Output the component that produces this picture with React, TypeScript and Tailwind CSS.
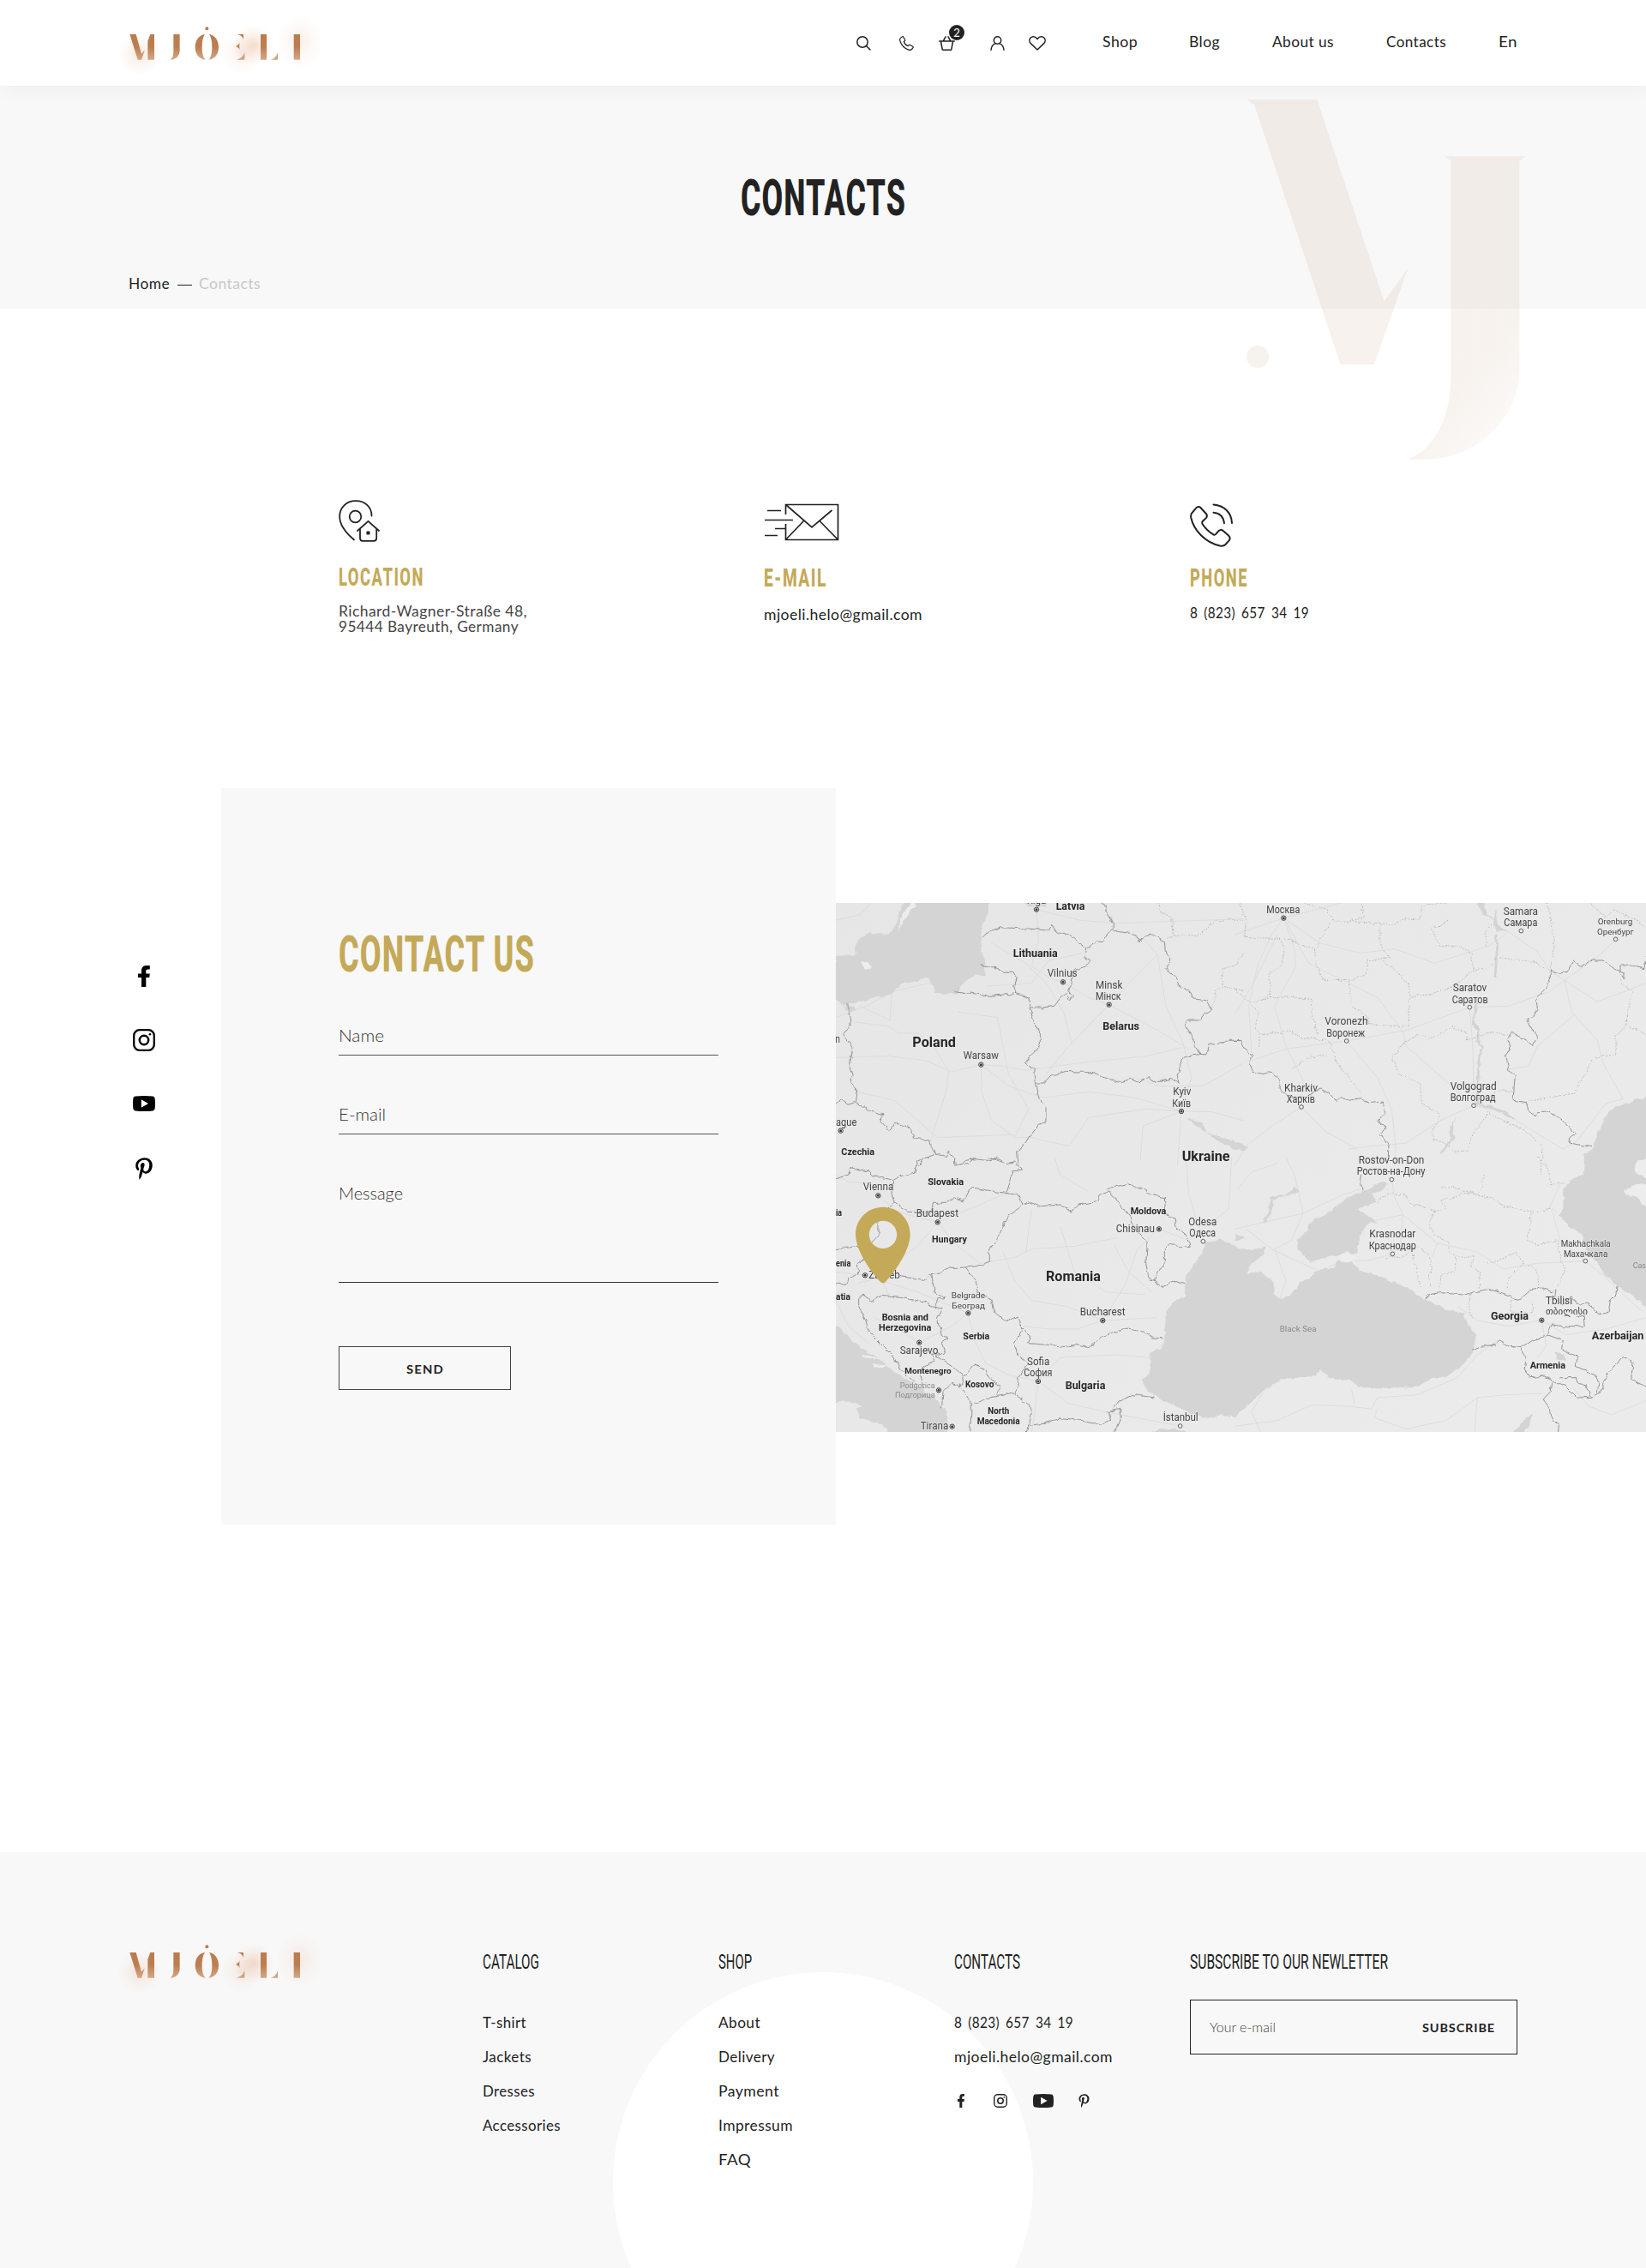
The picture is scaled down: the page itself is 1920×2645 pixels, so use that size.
import { useLayoutEffect, useRef, type ReactNode } from "react";
import { FaPinterestP } from "react-icons/fa";

/* Text stretched horizontally to fill the width given by its class. */
function Fit({ className = "", children }: { className?: string; children: ReactNode }) {
  const box = useRef<HTMLSpanElement>(null);
  const ink = useRef<HTMLSpanElement>(null);
  useLayoutEffect(() => {
    const measure = () => {
      if (!box.current || !ink.current) return;
      ink.current.style.transform = "none";
      const natural = ink.current.getBoundingClientRect().width;
      const k = box.current.getBoundingClientRect().width / natural;
      ink.current.style.transform = `scaleX(${k})`;
    };
    measure();
    document.fonts.ready.then(measure);
  }, []);
  return (
    <span ref={box} className={`block shrink-0 whitespace-nowrap text-left ${className}`}>
      <span ref={ink} className="inline-block origin-left">
        {children}
      </span>
    </span>
  );
}

function Logo({ id }: { id: string }) {
  return (
    <svg viewBox="0 0 780 300" className="block h-[100px] w-[260px] shrink-0" role="img" aria-label="MJOELI">
      <defs>
        <linearGradient id={`${id}-fill`} x1="0" y1="95" x2="0" y2="212" gradientUnits="userSpaceOnUse">
          <stop offset="0" stopColor="#ba7b4b" />
          <stop offset="0.6" stopColor="#bc7e50" />
          <stop offset="1" stopColor="#d6aa8a" />
        </linearGradient>
        <radialGradient id={`${id}-glow`}>
          <stop offset="0" stopColor="#e0a37a" stopOpacity="0.34" />
          <stop offset="0.5" stopColor="#e0a37a" stopOpacity="0.14" />
          <stop offset="1" stopColor="#e0a37a" stopOpacity="0" />
        </radialGradient>
      </defs>
      <circle cx="128" cy="190" r="75" fill={`url(#${id}-glow)`} opacity="0.7" />
      <circle cx="485" cy="185" r="72" fill={`url(#${id}-glow)`} opacity="0.55" />
      <circle cx="528" cy="158" r="70" fill={`url(#${id}-glow)`} />
      <ellipse cx="690" cy="145" rx="80" ry="95" fill={`url(#${id}-glow)`} opacity="0.5" />
      <g fill={`url(#${id}-fill)`}>
        <path d="M94 120H116L135 188L146 176L135 209H122ZM157 209V143L166 120H180V209Z" />
        <path d="M247 120H269V176C269 197 253 209 236 209C245 203 247 192 247 178Z" />
        <path d="M357 120C335 123 323 142 323 165C323 190 338 207 359 209C350 200 347 185 347 165C347 145 350 130 357 120Z" />
        <path d="M372 120C393 123 405 142 405 165C405 190 391 207 370 209C379 200 382 185 382 165C382 145 379 130 372 120Z" />
        <circle cx="364" cy="100" r="6" />
        <path d="M470 120H492V138C488 127 480 122 470 120ZM465 162C470 159 475 155 479 149C477 158 477 167 480 175C475 167 470 164 465 162ZM496 183V209H466C480 206 492 198 496 183Z" />
        <path d="M552 120H573V209H552ZM612 182V209H586C600 206 609 196 612 182Z" />
        <path d="M668 120H690V209H668Z" />
      </g>
    </svg>
  );
}

function Monogram() {
  return (
    <svg viewBox="0 0 1000 1280" className="pointer-events-none absolute left-[1453px] top-[110px] h-[427px] w-[333px]" aria-hidden>
      <defs>
        <linearGradient id="mono" x1="850" y1="1093" x2="1020" y2="1238" gradientUnits="userSpaceOnUse">
          <stop offset="0" stopColor="#b08050" stopOpacity="0.1" />
          <stop offset="1" stopColor="#c88a68" stopOpacity="0.05" />
        </linearGradient>
      </defs>
      <g transform="translate(-99 -60)">
        <path fill="#b08050" fillOpacity="0.1" d="M103 78H349L584 783L668 667L549 1005H431L129 95Z" />
        <path fill="url(#mono)" d="M794 276H1081L1058 292V1020C1058 1200 900 1340 720 1338H664C760 1305 818 1190 818 1050V292Z" />
        <circle cx="141" cy="978" r="39" fill="#b08050" fillOpacity="0.1" />
      </g>
    </svg>
  );
}

/* ---------- icons ---------- */

const line = { fill: "none", stroke: "#222", strokeLinecap: "round", strokeLinejoin: "round" } as const;

const SearchIcon = () => (
  <svg viewBox="0 0 17 17" className="h-[17px] w-[17px]" {...line} strokeWidth="1.5">
    <circle cx="7" cy="7" r="6.2" />
    <path d="M11.5 11.5L16 16" />
  </svg>
);
const PhoneIcon = () => (
  <svg viewBox="0 0 17 17" className="h-[17px] w-[17px]" {...line} strokeWidth="1.2">
    <path d="M1.4 2.4L3.2 .9C3.7 .5 4.3 .7 4.6 1.1L6.6 4.3C6.9 4.8 6.7 5.4 6.3 5.7L5.3 6.5C6 8.7 8 10.8 10.4 11.7L11.3 10.6C11.7 10.2 12.2 10.1 12.7 10.4L15.8 12.3C16.3 12.6 16.4 13.3 16 13.7L14.5 15.5C13.6 16.5 11.8 16.5 10.3 15.9C5.9 14.2 2.6 10.6 1.1 6.5C.5 4.8 .3 3.4 1.4 2.4Z" />
  </svg>
);
const BasketIcon = () => (
  <svg viewBox="0 0 19 17" className="h-[17px] w-[19px]" {...line} strokeWidth="1.5">
    <path d="M.8 6H18.2M2.4 6L4.2 15.6C4.3 16 4.6 16.2 5 16.2H14C14.4 16.2 14.7 16 14.8 15.6L16.6 6M5.4 5.6L8 .8M13.6 5.6L11 .8" />
  </svg>
);
const UserIcon = () => (
  <svg viewBox="0 0 17 17" className="h-[17px] w-[17px]" {...line} strokeWidth="1.5">
    <circle cx="8.5" cy="5" r="4.2" />
    <path d="M1 16.2C1.3 12.5 3.4 9.6 6.3 8.6M16 16.2C15.7 12.5 13.6 9.6 10.7 8.6" />
  </svg>
);
const HeartIcon = () => (
  <svg viewBox="0 0 20 17" className="h-[17px] w-5" {...line} strokeWidth="1.5">
    <path d="M10 16L2.3 8.6C.5 6.8 .4 4.1 2 2.3C3.8 .3 7 .3 8.8 2.2L10 3.6L11.2 2.2C13 .3 16.2 .3 18 2.3C19.6 4.1 19.5 6.8 17.7 8.6Z" />
  </svg>
);

const LocationIcon = () => (
  <svg viewBox="0 0 48 49" className="block h-[49px] w-12" {...line} strokeWidth="1.8">
    <path d="M38.5 18.5C38.5 8 30.5 1.2 20 1.2C9 1.2 1.2 9 1.2 19.5C1.2 29.5 8.5 38.5 18 46.5" />
    <circle cx="19.5" cy="19.5" r="6.8" />
    <path d="M22 36L34.5 24.8L47 36M25 34V44.5C25 46.5 26 47.8 28 47.8H41C43 47.8 44.2 46.5 44.2 44.5V34" />
    <rect x="32.5" y="36.5" width="4" height="4" rx=".5" fill="#222" stroke="none" />
  </svg>
);
const MailIcon = () => (
  <svg viewBox="0 0 88 44" className="block h-11 w-[88px]" fill="none" stroke="#222" strokeWidth="1.7">
    <path d="M25.5 13V1.5H86.5V42.5H25.5V24M25.5 1.5L56 28L79.5 8M25.5 42.5L46.5 20.5M86.5 42.5L65 20.5M4 8.5H20M1 19.500H34M13 29.5H25.5M1 37.5H16" />
  </svg>
);
const CallIcon = () => (
  <svg viewBox="0 0 50 51" className="block h-[51px] w-[50px]" {...line} strokeWidth="2">
    <path d="M2.7 10.8L7.5 5.2C8.8 3.8 11 3.7 12.4 5L18.8 12C20 13.4 20.1 15.4 19.1 16.9L15 20.8C13.9 22 13.8 22.8 14.7 24.2C18.2 29.5 22.5 33.5 27.3 36.3C28.5 37 29.6 36.7 30.5 35.7L33.5 32.2C34.9 30.7 37.2 30.6 38.7 32L45 37.6C47 39.4 47.2 41.2 45.8 43.2L41.5 48C40 49.6 37.6 49.9 35 49.5C18 46 4.5 31.5 1.2 16.5C.8 14.2 1.2 12.4 2.7 10.8Z" />
    <path d="M27.5 10.8C34.5 11.3 39 16 40 23.2M27.5 1.4C40 2.3 48.5 11 49 23" />
  </svg>
);

const FacebookIcon = ({ className }: { className: string }) => (
  <svg viewBox="0 0 14 25" preserveAspectRatio="none" className={className} fill="currentColor">
    <path d="M4 25V14H0V9.500H4V6.200C4 2 6.300 0 10 0H13.800V4.400H11.500C9.900 4.400 9.300 5.100 9.300 6.500V9.500H13.800L13.200 14H9.300V25Z" />
  </svg>
);
const InstagramIcon = ({ className }: { className: string }) => (
  <svg viewBox="0 0 26 26" className={className} fill="none" stroke="currentColor">
    <rect x="1.200" y="1.200" width="23.600" height="23.600" rx="6.500" strokeWidth="2.300" />
    <circle cx="13" cy="13" r="5.200" strokeWidth="2.500" />
    <circle cx="19.900" cy="6.300" r="1.300" fill="currentColor" stroke="none" />
  </svg>
);
const YoutubeIcon = ({ className }: { className: string }) => (
  <svg viewBox="0 0 26 18" preserveAspectRatio="none" className={className} fill="currentColor">
    <path fillRule="evenodd" d="M3 .6C9 -.2 17 -.2 23 .6C24.800 .9 25.400 2 25.700 3.500C26.100 7 26.100 11 25.700 14.500C25.400 16 24.800 17.100 23 17.400C17 18.200 9 18.200 3 17.400C1.200 17.100 .6 16 .3 14.500C-.1 11 -.1 7 .3 3.500C.6 2 1.200 .9 3 .6ZM9.800 4.300V13.700L18 9Z" />
  </svg>
);

/* ---------- map ---------- */

type Label = [x1: number, x2: number, y: number, text: string, size?: number, kind?: "b" | "g"];

type Sheet = {
  at: string;
  water: string[];
  land?: string[];
  borders: string[];
  dotted: string[];
  roads: string[];
  rivers?: string[];
  capitals: number[][];
  cities: number[][];
  labels: Label[];
};

const sheets: Sheet[] = [
  {
    at: "translate(-5 -13) scale(.33333)",
    water: [
      "250,37 225,120 195,150 130,145 95,165 80,200 85,220 15,225 10,375 45,395 70,392 210,358 240,325 340,303 352,318 362,355 440,358 455,325 500,292 540,295 535,235 522,195 528,120 548,70 550,30 250,30",
      "660,30 760,30 750,50 690,55",
      "1240,788 1300,812 1312,845 1345,852 1445,885 1445,905 1380,888 1330,858 1298,835",
      "40,400 80,402 85,415 60,420",
    ],
    land: ["105,240 130,250 134,270 115,268", "285,30 250,75 228,140 245,112 292,50 292,30"],
    borders: [
      "527,165 550,140 590,125 655,128 700,130 755,135 770,115 785,138 830,150 865,180 890,195 910,188 925,175 950,175 965,150 985,130 985,110 965,70 945,30",
      "985,135 1010,140 1045,145 1065,150 1075,175 1100,155 1125,150 1165,175 1168,210 1185,235 1170,270 1205,300 1220,335 1255,345 1265,375 1310,380 1330,410 1300,430 1290,450 1245,450 1235,465 1260,500 1268,530 1290,568 1310,570 1325,535 1365,530 1390,520 1430,520",
      "890,195 885,230 905,238 895,255 870,270 845,280 840,320 830,345 845,365 835,378 825,355 800,372 780,400 740,405 695,405",
      "520,255 570,265 600,280 635,280 648,300 638,330 645,355 690,372 693,405 710,460 730,495 730,540 690,580 680,600 710,620 715,670 720,710 750,755 750,805 725,815 650,915 655,960",
      "430,347 555,364 640,357",
      "715,672 740,672 765,645 820,628 905,632 970,655 1010,665 1050,655 1080,668 1110,645 1125,668 1190,655 1215,672 1210,640 1230,580 1260,573 1295,568",
      "60,390 60,420 67,465 42,500 72,545 62,600 75,640 68,665 90,700 85,735 60,745 35,725 10,745",
      "85,732 110,755 165,775 185,780 170,800 205,840 220,808 275,825 290,860 340,870 345,885 365,918 400,925 408,910 430,930 432,960",
      "365,918 320,935 305,960",
      "450,955 470,940 500,935 545,940 580,932 610,950",
    ],
    dotted: [
      "1140,30 1155,70 1190,95 1195,155 1290,150 1340,100 1440,100",
      "1175,160 1195,158",
      "1440,220 1420,250 1370,270 1365,330 1345,350 1332,405",
      "1365,330 1440,345",
    ],
    roads: [
      "15,580 200,575 330,590 420,630 523,605 600,610 680,625 860,600 1100,575 1230,545",
      "75,455 200,470 235,495 305,495 360,545 410,630 400,700 350,860",
      "523,605 525,700 560,800 640,860 700,860 830,890 900,790 1100,760 1224,768",
      "210,350 205,450 100,400",
      "15,440 120,400 210,350 340,320",
      "523,605 620,680 740,720 900,700 1060,720 1224,768 1330,770 1440,800",
      "90,700 220,730 370,860 500,855 640,850",
      "717,62 725,170 700,260 760,300 810,316 900,370 971,395 1150,490 1250,550",
      "971,395 830,540 750,640",
      "971,395 1050,310 1140,220 1090,160",
      "1140,220 1170,400 1230,530 1260,650 1224,768",
      "717,62 870,100 1000,110 1440,95",
      "540,330 700,320 760,240 880,215",
      "1224,768 1210,960",
      "1440,600 1300,680 1150,680 1060,650",
      "560,180 680,250 760,330 815,430 840,530",
      "15,100 100,80 140,37",
      "640,860 690,760 620,640 580,440 440,420",
      "1224,768 1090,820 1080,940",
    ],
    capitals: [[717, 62], [810, 316], [971, 395], [523, 605], [1224, 768], [32, 836]],
    cities: [],
    labels: [
      [683, 751, 43, "Rīga"],
      [785, 886, 62, "Latvia", 36, "b"],
      [635, 791, 228, "Lithuania", 36, "b"],
      [755, 860, 297, "Vilnius"],
      [924, 1018, 338, "Minsk"],
      [924, 1013, 378, "Мінск"],
      [949, 1077, 483, "Belarus", 37, "b"],
      [283, 435, 543, "Poland", 47, "b"],
      [461, 585, 586, "Warsaw"],
      [13, 30, 528, "n"],
      [1195, 1258, 711, "Kyiv"],
      [1192, 1257, 752, "Київ"],
      [15, 88, 818, "ague"],
      [34, 150, 920, "Czechia", 32, "b"],
      [1226, 1394, 942, "Ukraine", 47, "b"],
    ],
  },
  {
    at: "translate(465 -13) scale(.33333)",
    water: [
      "1450,720 1400,728 1330,755 1300,785 1270,850 1255,895 1225,920 1220,985 1450,985",
      "848,30 865,75 905,100 915,140 955,138 925,120 915,60 908,95 885,80 872,30",
      "775,788 750,830 755,870 712,920 735,910 770,862 765,820",
      "-10,865 45,895 35,907 -10,900",
    ],
    borders: [
      "0,520 20,520 35,550 62,575 50,595 65,630 100,638 130,630 155,655 160,690 185,715 250,718 300,690 330,705 360,735 370,715 400,730 440,722 470,740 520,735 528,775 500,805 528,820 510,850 540,885 538,930",
      "1445,225 1432,270 1385,255 1350,255 1350,285 1365,305 1365,285 1330,270 1290,240 1250,240 1210,262 1185,240 1165,280 1140,285 1105,275 1105,300 1090,340 1055,375 1060,405 1045,440 1022,445 1060,505 1045,538 1010,515 970,490 955,515 965,540 950,570 960,625 982,640 975,730 1020,737 1030,765 1055,785 1060,770 1100,768 1150,800 1198,850 1170,860 1175,880 1250,893",
    ],
    dotted: [
      "20,37 40,100 35,160 100,165 160,165 175,200 165,260 120,290 125,360 90,380 50,390 85,420 70,480 90,500 85,545",
      "175,165 280,200 285,250 310,310 400,310 410,400 470,440 470,465 610,470 610,370",
      "400,310 460,290 465,240 545,230 510,190 510,110 340,100 320,130 285,200",
      "345,100 320,60 240,40",
      "410,100 455,90 445,40",
      "510,110 560,115 600,95 650,100 655,50 750,37",
      "750,100 690,130 720,190 800,195 830,215 835,275 890,265 920,230 1050,245 1100,275",
      "880,190 880,130 915,110",
      "1095,37 1110,130 1120,190 1105,270",
      "520,240 610,320 615,365 680,360 770,330 835,275",
      "90,500 190,490 240,510 330,520 355,590 440,700",
      "200,620 260,580 330,570",
      "550,590 580,540 640,500 690,515 760,475 810,490 815,520 900,490 955,500",
      "555,590 580,640 650,670 655,740 715,775 715,800 690,840 700,870 740,880 770,910 820,905 830,850 870,800 885,770 960,810 1010,830 1080,895 1070,990",
      "1020,735 1190,705 1255,580 1335,570 1335,500 1370,465 1440,500",
      "1370,465 1390,350 1355,320 1355,290",
      "95,375 180,365 270,380 275,440 290,500",
      "0,340 50,390",
      "900,710 930,695 975,700",
      "1240,37 1300,90 1330,60 1440,120",
    ],
    roads: [
      "172,92 130,150 80,260 50,400 60,560",
      "172,92 210,200 215,260 140,400 180,540 240,660 234,753",
      "172,92 260,250 400,320 500,370 590,490 600,540 760,680 837,748",
      "172,92 300,180 440,215 560,200 700,250 890,190 960,140 1060,210 1100,270",
      "392,522 600,485 780,420 823,404",
      "392,522 180,550 60,590",
      "392,522 500,650 550,760 565,900 560,960",
      "823,404 960,400 1100,350 1155,310 1270,385 1440,320",
      "1334,166 1280,220 1155,310 1180,420 1270,520 1290,600 1360,725 1300,740 1200,870",
      "837,748 720,800 600,880 480,890 400,900",
      "837,748 940,770 1050,840 1150,900 1200,870",
      "234,753 130,820 40,890 0,960",
      "234,753 320,840 430,900",
      "172,92 0,150",
      "823,404 835,560 837,748",
      "1100,275 1155,310",
      "960,620 1030,610 1060,540 1190,430",
      "0,430 60,330 150,150",
      "172,92 380,37",
    ],
    rivers: ["850,375 838,430 835,460 855,490 848,520 870,545 855,580 850,740", "915,150 920,190 912,300", "845,740 900,755 980,790"],
    capitals: [[172, 92]],
    cities: [[1003, 137], [1334, 166], [823, 404], [392, 522], [234, 753], [837, 748]],
    labels: [
      [112, 229, 75, "Москва"],
      [941, 1062, 81, "Samara"],
      [943, 1060, 121, "Самара"],
      [1271, 1393, 114, "Orenburg", 29],
      [1269, 1397, 149, "Оренбург", 29],
      [764, 883, 349, "Saratov"],
      [761, 887, 389, "Саратов"],
      [316, 467, 465, "Voronezh"],
      [322, 457, 506, "Воронеж"],
      [174, 291, 698, "Kharkiv"],
      [182, 282, 739, "Харків"],
      [755, 917, 692, "Volgograd"],
      [755, 914, 733, "Волгоград"],
      [434, 664, 951, "Rostov-on-Don"],
    ],
  },
  {
    at: "translate(-5 297) scale(.33333)",
    water: [
      "1416,310 1360,285 1310,300 1285,350 1240,410 1235,490 1200,500 1170,540 1165,630 1160,670 1120,680 1110,760 1085,780 1110,815 1160,850 1250,890 1320,915 1360,900 1416,908",
      "5,580 50,615 100,665 150,690 200,735 250,770 300,800 350,830 385,870 405,890 405,970 205,970 180,935 100,910 90,880 110,870 60,850 5,860",
      "1120,965 1150,948 1200,950 1260,965",
    ],
    land: ["110,690 165,700 150,706 112,698", "140,720 195,728 180,736 145,730"],
    borders: [
      "10,75 60,60 65,35 130,48 145,65 200,75 215,80 240,65 290,55 300,10 320,0",
      "215,80 210,130 220,160 265,190 350,192 355,160 400,160 430,140 460,150 490,105 550,115 612,125 635,50 665,45 640,15 610,20 550,0",
      "432,0 435,25 480,20 500,5",
      "612,125 650,130 670,165 620,205 575,290 550,330 550,365 510,380 450,385 410,385 380,405 345,410 320,430 240,415",
      "670,165 690,155 730,170 805,165 840,190 865,165 930,155 940,130 970,120 1000,150 1045,210 1055,240 1105,300 1100,370 1110,420 1160,455 1200,430 1235,440",
      "965,110 1040,90 1065,105 1100,115 1115,130 1165,140 1170,200 1200,210 1205,240 1240,270 1255,310 1215,315 1185,300 1165,320 1165,370 1140,400 1130,430 1110,430",
      "215,160 165,220 165,270 130,310 85,310 10,325",
      "120,350 90,370 95,405 60,420 50,445 10,440",
      "95,520 95,495 110,480 145,505 160,483 240,490 330,505 365,530 388,530 370,565 385,620 408,632 385,650 400,685 350,688 360,710 310,745 320,810",
      "95,520 120,570 130,610 210,690 240,740 300,795",
      "350,410 360,470 395,490 370,495 365,530",
      "470,385 505,430 510,470 560,495 570,540 610,575 650,555 665,600 695,625 685,650 760,655 820,662 850,655 900,665 950,625 1035,597 1080,605 1120,630 1160,632",
      "665,608 640,650 650,690 690,720 650,770 655,800 640,825",
      "360,690 420,730 465,765 450,800 490,860 485,965",
      "385,880 390,820 420,790 450,800",
      "500,860 550,840 640,825 690,865 700,890 690,940 680,965",
      "690,940 730,935 800,910 870,920 940,935 980,915 965,890 1010,880 1015,910 990,965",
      "985,880 1010,850 1060,830 1130,840",
      "465,765 500,725 540,745 560,780 590,800 575,830",
    ],
    dotted: [],
    roads: [
      "163,133 120,90 60,85 15,60",
      "163,133 230,190 371,226 460,190 600,130",
      "371,226 430,300 520,370 640,350 700,320 850,310 1000,280",
      "371,226 300,310 200,380 117,412 15,400",
      "117,412 300,470 478,544 500,640 540,720 620,760 723,783",
      "949,570 820,520 700,500 640,430 600,330",
      "949,570 1030,440 1070,320 1146,250",
      "949,570 1140,560",
      "949,570 860,600 760,600 670,590",
      "723,783 800,700 1000,690 1110,700",
      "723,783 830,860 960,890 1220,939",
      "723,783 710,900 700,960",
      "800,240 850,400 960,470 1100,480",
      "1146,250 1250,290 1390,180 1400,0",
      "990,310 1040,400 1120,470",
      "700,180 680,330",
      "307,647 420,590 478,544",
      "307,647 230,600 150,560",
      "15,500 60,590 130,650",
      "780,0 800,60 900,120",
      "1240,0 1250,130 1300,290",
      "200,480 170,420 90,440",
    ],
    capitals: [[163, 133], [371, 226], [117, 412], [1146, 250], [478, 544], [307, 647], [375, 814], [723, 783], [949, 570], [422, 941]],
    cities: [[1300, 293], [1220, 939]],
    labels: [
      [337, 462, 97, "Slovakia", 31, "b"],
      [110, 217, 113, "Vienna"],
      [296, 444, 207, "Budapest"],
      [351, 474, 297, "Hungary", 32, "b"],
      [15, 36, 203, "ia", 31, "b"],
      [15, 67, 382, "enia", 31, "b"],
      [15, 66, 498, "atia", 31, "b"],
      [130, 239, 422, "Zagreb"],
      [1046, 1171, 198, "Moldova", 32, "b"],
      [995, 1131, 261, "Chisinau"],
      [1249, 1348, 237, "Odesa"],
      [1252, 1344, 277, "Одеса"],
      [750, 942, 432, "Romania", 47, "b"],
      [419, 537, 491, "Belgrade", 29],
      [421, 537, 527, "Београд", 29],
      [176, 339, 570, "Bosnia and", 32, "b"],
      [165, 349, 607, "Herzegovina", 32, "b"],
      [460, 553, 635, "Serbia", 32, "b"],
      [239, 373, 688, "Sarajevo"],
      [256, 419, 755, "Montenegro", 29, "b"],
      [239, 362, 808, "Podgorica", 28, "g"],
      [222, 362, 840, "Подгорица", 28, "g"],
      [468, 568, 805, "Kosovo", 30, "b"],
      [684, 763, 725, "Sofia"],
      [673, 772, 766, "София"],
      [818, 958, 811, "Bulgaria", 37, "b"],
      [869, 1028, 551, "Bucharest"],
      [547, 622, 897, "North", 31, "b"],
      [509, 659, 933, "Macedonia", 31, "b"],
      [311, 409, 952, "Tirana"],
      [1160, 1283, 922, "İstanbul"],
    ],
  },
  {
    at: "translate(465 297) scale(.33333)",
    water: [
      "1222,40 1220,60 1180,75 1150,110 1150,180 1135,205 1180,250 1215,265 1230,320 1290,400 1340,450 1400,490 1450,530 1450,40",
      "540,90 520,85 440,120 380,150 340,185 270,220 250,260 215,290 225,320 265,370 330,345 400,335 430,335 435,300 440,270 470,225 500,230 470,205 430,180 500,155 480,130 520,110",
      "0,315 60,325 110,310 100,340 50,380 50,405 90,400 130,425 140,480 165,495 200,480 230,440 265,420 280,400 350,385 365,360 410,370 450,400 510,415 600,455 670,500 740,530 800,545 820,590 845,625 835,680 800,725 740,765 690,775 640,800 560,805 440,805 400,775 370,780 330,770 300,745 280,765 170,775 95,820 0,908",
      "1020,910 1045,900 1040,925 1010,965 970,965",
      "1118,680 1150,690 1160,715 1130,705",
      "215,105 225,120 200,130 150,140 135,150 130,190 105,225 95,225 120,190 125,140 180,128",
      "0,270 40,278 10,292 0,290",
    ],
    land: ["1450,0 1405,15 1400,45 1412,62 1450,75", "1450,92 1390,98 1362,115 1372,132 1405,135 1430,165 1450,175", "365,340 400,330 425,350 405,368 370,358"],
    borders: [
      "443,60 440,80 447,115",
      "672,500 675,480 720,473 800,480 890,460 970,485 980,500 1000,495 1035,465 1070,455 1110,470 1125,462 1120,500 1150,515 1180,490 1210,515 1235,510 1275,545 1308,545 1315,500 1335,480 1338,450",
      "832,672 865,660 915,655 925,640 960,660 1000,665 1040,640 1090,625 1105,600 1110,585 1150,590 1225,590 1222,560 1195,550",
      "1000,665 1020,700 1015,740 1035,770 1085,765 1115,780 1160,800 1200,840 1250,838 1230,795 1200,790 1195,770 1135,770",
      "1095,620 1150,640 1145,670 1200,700 1195,730 1260,760 1275,785 1270,820",
      "1250,838 1280,820 1310,750 1360,695 1395,715 1388,775 1445,805",
      "1110,785 1105,820 1080,845 1105,880 1110,915 1135,935 1132,965",
    ],
    dotted: [
      "505,160 510,135 590,125 620,165 680,175 700,190 680,230 700,270 750,300 750,330 780,345 835,345 830,380 860,400 855,460",
      "700,190 740,180 720,150 770,140 800,120 850,130 900,140 930,165 1040,190 1110,180 1130,185",
      "725,108 770,105 860,130",
      "1040,190 1025,290 1060,305 1130,290 1140,350 1160,390 1130,450",
      "640,310 680,340 690,380 680,420 690,455",
      "625,340 640,400 650,450",
      "775,350 770,400 720,410 715,460",
      "880,370 950,350 985,330 1010,370 960,420 955,465",
      "1010,370 1060,400 1065,450",
      "870,60 870,100 850,125",
      "1060,0 1100,40 1105,95 1150,85",
      "825,480 820,520 830,560",
      "970,500 965,540 1040,545 1045,500",
      "530,350 600,345 620,310",
    ],
    roads: [
      "550,77 560,140 590,200 710,300 850,330 940,390 1060,370 1228,362",
      "590,200 580,300 553,337 470,360 420,360",
      "0,250 240,195 380,130 440,110",
      "240,195 210,60 180,0",
      "240,195 200,290 140,320 180,430 160,490",
      "40,250 130,320 300,400 360,370",
      "710,300 690,350",
      "1110,180 1140,290 1228,362 1300,420 1360,480 1430,540",
      "1075,569 960,590 850,570 780,520",
      "1075,569 1160,620 1300,600 1440,560",
      "1075,569 1090,660 1060,700",
      "0,940 150,920 270,865 400,870 480,880 500,840 640,830 780,770 850,690 920,640",
      "500,880 490,910 600,950 740,920 850,840 950,830 1080,825",
      "850,840 840,960",
      "100,820 60,890 90,960",
      "590,200 450,230",
      "1180,800 1240,870 1320,900 1440,850",
      "10,110 60,50 150,20",
      "1140,90 1100,180",
      "410,810 420,860",
    ],
    capitals: [[1075, 569]],
    cities: [[550, 77], [553, 337], [1228, 362]],
    labels: [
      [428, 667, 61, "Ростов-на-Дону"],
      [472, 634, 280, "Krasnodar"],
      [470, 636, 321, "Краснодар"],
      [1142, 1316, 311, "Makhachkala", 30],
      [1152, 1306, 347, "Махачкала", 30],
      [1394, 1440, 386, "Cas", 29, "g"],
      [158, 287, 608, "Black Sea", 29, "g"],
      [1089, 1182, 513, "Tbilisi"],
      [1089, 1236, 550, "თბილისი", 30],
      [897, 1029, 566, "Georgia", 36, "b"],
      [1250, 1432, 636, "Azerbaijan", 36, "b"],
      [1034, 1158, 738, "Armenia", 33, "b"],
    ],
  },
];

function MapView() {
  return (
    <div className="relative h-[617px] w-[945px] shrink-0 overflow-hidden bg-[#e9e9e9]">
      <svg viewBox="0 0 945 617" className="block h-full w-full">
        <defs>
          <filter id="jag" x="-2%" y="-2%" width="104%" height="104%">
            <feTurbulence type="fractalNoise" baseFrequency="0.13" numOctaves="2" seed="4" />
            <feDisplacementMap in="SourceGraphic" scale="5.500" xChannelSelector="R" yChannelSelector="G" />
          </filter>
          <linearGradient id="land" x1="0" y1="0" x2="1" y2="0.6">
            <stop offset="0" stopColor="#e6e6e6" />
            <stop offset="1" stopColor="#ebebeb" />
          </linearGradient>
        </defs>
        <rect width="945" height="617" fill="url(#land)" />
        {sheets.map((s) => (
          <g key={s.at} transform={s.at} fill="none" stroke="#dadada" strokeWidth="2.5" strokeLinejoin="round">
            {s.roads.map((p) => (
              <polyline key={p} points={p} />
            ))}
          </g>
        ))}
        <g filter="url(#jag)">
          {sheets.map((s) => (
            <g key={s.at} transform={s.at}>
              {s.water.map((p) => (
                <polygon key={p} points={p} fill="#d4d4d4" />
              ))}
              {s.land?.map((p) => (
                <polygon key={p} points={p} fill="#ededed" />
              ))}
              {s.rivers?.map((p) => (
                <polyline key={p} points={p} fill="none" stroke="#d2d2d2" strokeWidth="8" />
              ))}
              <g fill="none" stroke="#8b8b8b" strokeWidth="2.8" strokeLinejoin="round">
                {s.borders.map((p) => (
                  <polyline key={p} points={p} />
                ))}
              </g>
              <g fill="none" stroke="#b0b0b0" strokeWidth="2.5" strokeDasharray="5 5">
                {s.dotted.map((p) => (
                  <polyline key={p} points={p} />
                ))}
              </g>
            </g>
          ))}
        </g>
        {sheets.map((s) => (
          <g key={s.at} transform={s.at} fontFamily="Roboto, 'DejaVu Sans', sans-serif">
            {s.capitals.map(([x, y]) => (
              <g key={`${x}-${y}`}>
                <circle cx={x} cy={y} r="8" fill="#e8e8e8" stroke="#3a3a3a" strokeWidth="3" />
                <circle cx={x} cy={y} r="4.5" fill="#3a3a3a" />
              </g>
            ))}
            {s.cities.map(([x, y]) => (
              <circle key={`${x}-${y}`} cx={x} cy={y} r="7" fill="#eee" stroke="#555" strokeWidth="2.8" />
            ))}
            {s.labels.map(([x1, x2, y, text, size = 36, kind]) => (
              <text
                key={text + x1}
                x={x1}
                y={y}
                textLength={x2 - x1}
                lengthAdjust="spacingAndGlyphs"
                fontSize={size}
                fontWeight={kind === "b" ? 700 : 400}
                fill={kind === "b" ? "#262626" : kind === "g" ? "#8a8a8a" : "#444"}
                stroke="#ececec"
                strokeWidth={kind === "g" ? 0 : 3}
                paintOrder="stroke"
              >
                {text}
              </text>
            ))}
          </g>
        ))}
        <path
          transform="translate(-5 297) scale(.33333)"
          fill="#c4a958"
          fillRule="evenodd"
          d="M180 173C127 173 84 215 84 268C84 340 165 430 172 436C177 440 183 440 188 436C194 430 275 340 275 268C275 215 233 173 180 173ZM180 221A48.5 48.5 0 1 1 179.9 221Z"
        />
      </svg>
    </div>
  );
}

/* ---------- page ---------- */

const display = "font-['Roboto'] font-extrabold text-[#c4a958]";
const body = "text-[17px] tracking-wide text-[#222]";

export default function App() {
  return (
    <div className="relative w-[1920px] overflow-hidden bg-white font-['Lato',sans-serif] text-[#222]">
      <header className="relative z-10 flex h-[100px] items-start bg-white pl-[120px] shadow-[0_0_28px_rgba(0,0,0,0.06)]">
        <Logo id="top" />
        <div className="ml-[619px] flex pt-[42px]">
          <SearchIcon />
          <div className="ml-[33px]"><PhoneIcon /></div>
          <div className="relative ml-[29px]">
            <BasketIcon />
            <span className="absolute left-3 top-[-13px] flex h-[18px] w-[18px] items-center justify-center rounded-full bg-[#222] text-[13px] leading-none text-white">2</span>
          </div>
          <div className="ml-[41px]"><UserIcon /></div>
          <div className="ml-[28px]"><HeartIcon /></div>
        </div>
        <nav className={`ml-[66px] flex pt-[37px] leading-6 ${body}`}>
          <Fit className="w-[41px]">Shop</Fit>
          <Fit className="ml-[60px] w-[36px]">Blog</Fit>
          <Fit className="ml-[61px] w-[72px]">About us</Fit>
          <Fit className="ml-[61px] w-[70px]">Contacts</Fit>
          <Fit className="ml-[61px] w-[22px]">En</Fit>
        </nav>
      </header>

      <section className="flex h-[260px] flex-col bg-[#f8f8f8]">
        <h1 className="flex justify-center pt-[101px] font-['Roboto'] text-[60px] font-extrabold leading-[60px] tracking-[0.03em] text-[#222]">
          <Fit className="w-[193px]">CONTACTS</Fit>
        </h1>
        <div className="flex items-center pl-[150px] pt-[58px] text-[17px] leading-6 tracking-wide">
          <Fit className="w-[48px]">Home</Fit>
          <span className="ml-[9px] mt-[3px] h-px w-[17px] bg-[#222]" />
          <Fit className="ml-[8px] w-[72px] text-[#c8c8c8]">Contacts</Fit>
        </div>
      </section>
      <Monogram />

      <section className="flex h-[559px] items-start pl-[395px] pt-[223px]">
        <div className="w-[496px]">
          <LocationIcon />
          <h2 className={`mt-[26px] text-[30px] leading-[30px] tracking-[0.08em] ${display}`}>
            <Fit className="w-[100px]">LOCATION</Fit>
          </h2>
          <p className="mt-4 text-[17px] leading-[18px] tracking-wide text-[#444]">
            <Fit className="w-[220px]">Richard-Wagner-Straße 48,</Fit>
            <Fit className="w-[210px]">95444 Bayreuth, Germany</Fit>
          </p>
        </div>
        <div className="w-[497px] pt-[4px]">
          <MailIcon />
          <h2 className={`mt-[28px] text-[30px] leading-[30px] tracking-[0.08em] ${display}`}>
            <Fit className="w-[74px]">E-MAIL</Fit>
          </h2>
          <p className={`mt-[19px] leading-[18px] ${body}`}>
            <Fit className="w-[185px]">mjoeli.helo@gmail.com</Fit>
          </p>
        </div>
        <div className="pt-[4px]">
          <CallIcon />
          <h2 className={`mt-[21px] text-[30px] leading-[30px] tracking-[0.08em] ${display}`}>
            <Fit className="w-[68px]">PHONE</Fit>
          </h2>
          <p className={`mt-[17px] leading-[18px] [word-spacing:3px] ${body}`}>
            <Fit className="w-[139px]">8 (823) 657 34 19</Fit>
          </p>
        </div>
      </section>

      <section className="flex h-[859px] items-start">
        <div className="flex w-[258px] shrink-0 flex-col pl-[155px] pt-[207px] text-black">
          <FacebookIcon className="ml-[6px] h-[25px] w-[14px]" />
          <InstagramIcon className="mt-[49px] h-[26px] w-[26px]" />
          <YoutubeIcon className="mt-[52px] h-[18px] w-[26px]" />
          <FaPinterestP className="ml-[3px] mt-[54px] h-[26px] w-5" />
        </div>
        <form className="flex h-full w-[717px] shrink-0 flex-col bg-[#f8f8f8] pl-[137px] pt-[164px] text-[20px] font-light leading-6 text-[#333]">
          <h2 className={`text-[60px] leading-[60px] tracking-[0.03em] ${display}`}>
            <Fit className="w-[229px]">CONTACT US</Fit>
          </h2>
          <div className="mt-[52px] h-[36px] w-[443px] border-b border-[#555]">
            <Fit className="w-[53px]">Name</Fit>
          </div>
          <div className="mt-[56px] h-[36px] w-[443px] border-b border-[#555]">
            <Fit className="w-[55px]">E-mail</Fit>
          </div>
          <div className="mt-[56px] h-[117px] w-[443px] border-b border-[#333]">
            <Fit className="w-[75px]">Message</Fit>
          </div>
          <button type="button" className="mt-[74px] flex h-[51px] w-[201px] items-center justify-center border border-[#444] pt-[2px] text-[14px] font-bold leading-5 tracking-[0.08em] text-[#222]">
            <Fit className="w-[44px]">SEND</Fit>
          </button>
        </form>
        <div className="pt-[134px]">
          <MapView />
        </div>
      </section>

      <footer className="relative mt-[382px] flex h-[485px] items-start overflow-hidden bg-[#f8f8f8]">
        <div className="absolute left-[715px] top-[140px] h-[490px] w-[490px] rounded-full bg-white" />
        <div className="relative w-[563px] shrink-0 pl-[120px] pt-[77px]">
          <Logo id="bottom" />
        </div>
        <div className="relative w-[275px] shrink-0 pt-[116px]">
          <h3 className="font-['Roboto'] text-[24px] leading-6">
            <Fit className="w-[66px]">CATALOG</Fit>
          </h3>
          <ul className={`mt-[39px] leading-10 ${body}`}>
            <li><Fit className="w-[51px]">T-shirt</Fit></li>
            <li><Fit className="w-[57px]">Jackets</Fit></li>
            <li><Fit className="w-[61px]">Dresses</Fit></li>
            <li><Fit className="w-[91px]">Accessories</Fit></li>
          </ul>
        </div>
        <div className="relative w-[275px] shrink-0 pt-[116px]">
          <h3 className="font-['Roboto'] text-[24px] leading-6">
            <Fit className="w-[39px]">SHOP</Fit>
          </h3>
          <ul className={`mt-[39px] leading-10 ${body}`}>
            <li><Fit className="w-[49px]">About</Fit></li>
            <li><Fit className="w-[66px]">Delivery</Fit></li>
            <li><Fit className="w-[71px]">Payment</Fit></li>
            <li><Fit className="w-[87px]">Impressum</Fit></li>
            <li><Fit className="w-[38px]">FAQ</Fit></li>
          </ul>
        </div>
        <div className="relative w-[275px] shrink-0 pt-[116px]">
          <h3 className="font-['Roboto'] text-[24px] leading-6">
            <Fit className="w-[77px]">CONTACTS</Fit>
          </h3>
          <ul className={`mt-[39px] leading-10 ${body}`}>
            <li className="[word-spacing:3px]"><Fit className="w-[139px]">8 (823) 657 34 19</Fit></li>
            <li><Fit className="w-[185px]">mjoeli.helo@gmail.com</Fit></li>
          </ul>
          <div className="mt-[23px] flex">
            <FacebookIcon className="ml-1 h-4 w-2" />
            <InstagramIcon className="ml-[34px] h-4 w-4" />
            <YoutubeIcon className="ml-[30px] h-4 w-6" />
            <FaPinterestP className="ml-[29px] h-4 w-[13px]" />
          </div>
        </div>
        <div className="relative shrink-0 pt-[116px]">
          <h3 className="font-['Roboto'] text-[24px] leading-6">
            <Fit className="w-[231px]">SUBSCRIBE TO OUR NEWLETTER</Fit>
          </h3>
          <div className="mt-[32px] flex h-16 w-[382px] items-center justify-between border border-[#222] pl-[22px] pr-[25px] leading-6">
            <Fit className="w-[77px] text-[15px] font-light text-[#444]">Your e-mail</Fit>
            <Fit className="mt-[2px] w-[85px] text-[14px] font-bold tracking-[0.06em]">SUBSCRIBE</Fit>
          </div>
        </div>
      </footer>
    </div>
  );
}
